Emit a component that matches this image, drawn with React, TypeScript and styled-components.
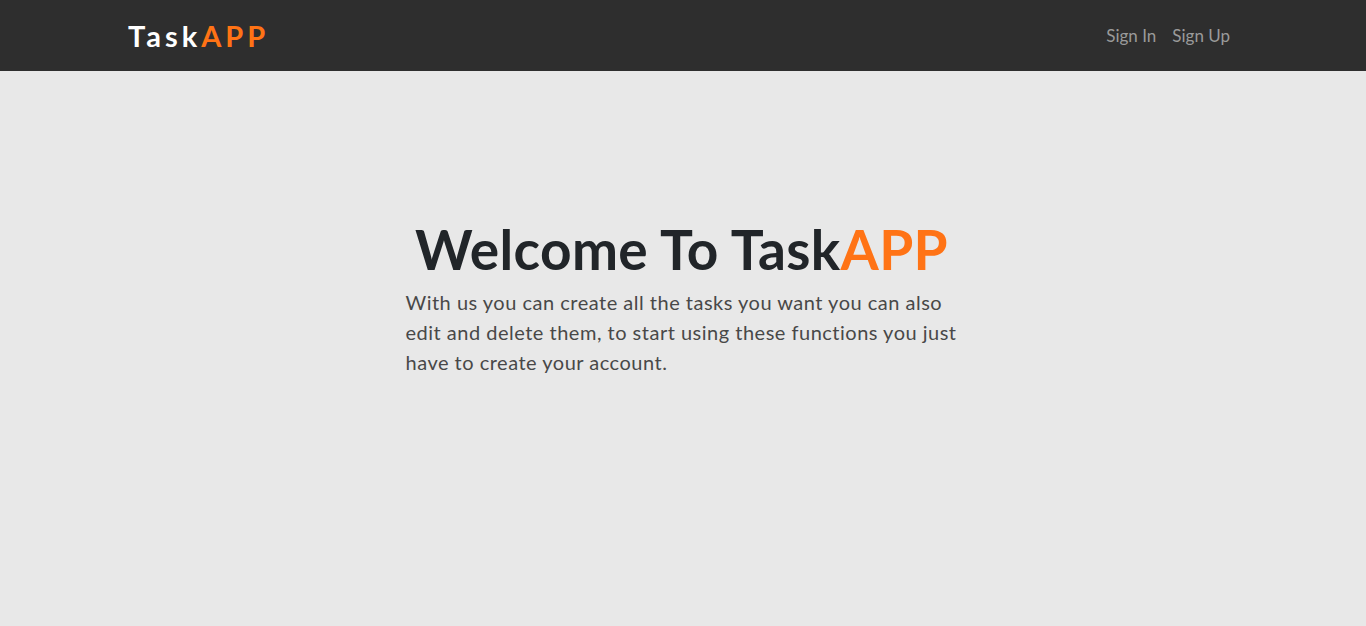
import React from "react";
import styled, { createGlobalStyle } from "styled-components";

const Global = createGlobalStyle`
  html, body { margin: 0; padding: 0; }
  body {
    background: #e8e8e8;
    font-family: Lato, "Open Sans", sans-serif;
    color: #212529;
  }
`;

const Navbar = styled.nav`
  height: 71px;
  background: #2e2e2e;
  display: flex;
  align-items: center;
  justify-content: space-between;
  padding: 0 128px 0 128px;
  box-sizing: border-box;
`;

const Brand = styled.a`
  font-size: 29px;
  font-weight: 700;
  letter-spacing: 4px;
  color: #ffffff;
  text-decoration: none;
  margin-top: -1px;
`;

const Accent = styled.span`
  color: #ff7315;
`;

const NavLinks = styled.div`
  display: flex;
  gap: 16px;
  margin-right: 8px;
`;

const NavLink = styled.a`
  font-size: 17px;
  color: #9a9a9a;
  text-decoration: none;
`;

const Hero = styled.main`
  display: flex;
  justify-content: center;
  padding-top: 145px;
`;

const HeroBody = styled.section`
  width: 560px;
  margin-left: -3px;
`;

const Title = styled.h1`
  margin: 0 0 5px 0;
  text-align: center;
  font-size: 55px;
  font-weight: 700;
  letter-spacing: 0.35px;
  line-height: 1.2;
  color: #212529;
`;

const Lead = styled.p`
  margin: 0;
  padding-left: 4px;
  font-size: 20px;
  line-height: 30px;
  letter-spacing: 0.5px;
  color: #484848;
`;

export default function App() {
  return (
    <>
      <Global />
      <Navbar>
        <Brand href="#">
          Task<Accent>APP</Accent>
        </Brand>
        <NavLinks>
          <NavLink href="#">Sign In</NavLink>
          <NavLink href="#">Sign Up</NavLink>
        </NavLinks>
      </Navbar>
      <Hero>
        <HeroBody>
          <Title>
            Welcome To Task<Accent>APP</Accent>
          </Title>
          <Lead>
            With us you can create all the tasks you want you can also edit and
            delete them, to start using these functions you just have to create
            your account.
          </Lead>
        </HeroBody>
      </Hero>
    </>
  );
}
